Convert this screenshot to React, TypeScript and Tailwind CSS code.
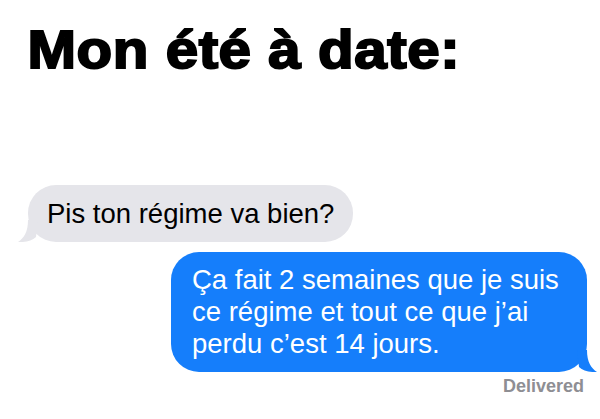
const sans = "font-['Liberation_Sans',Arial,sans-serif]";

function Tail({ side, color }: { side: "left" | "right"; color: string }) {
  // curled tail at the bottom corner of an iMessage bubble
  const d =
    side === "left"
      ? "M10 0 C10 12 6 18 0 22 C8 22.5 14 20.5 18 17 L20 0 Z"
      : "M10 0 C10 12 14 18 20 22 C12 22.5 6 20.5 2 17 L0 0 Z";
  return (
    <svg
      width="20"
      height="22"
      viewBox="0 0 20 22"
      className={`absolute bottom-0 ${side === "left" ? "-left-[10px]" : "-right-[10px]"}`}
    >
      <path d={d} fill={color} />
    </svg>
  );
}

export default function App() {
  return (
    <div className={`h-[419px] w-[600px] overflow-hidden bg-white ${sans}`}>
      <h1 className="origin-left scale-x-[1.1] pl-[25px] pt-[19px] text-[53px] leading-[62px] font-bold tracking-[0.5px] whitespace-nowrap text-black [-webkit-text-stroke:2px_black]">
        Mon été à date:
      </h1>

      <div className="mt-[104px] pl-[28px]">
        <div className="relative inline-block rounded-[28px] bg-[#e5e5ea] py-[12px] pl-[19px] pr-[19px] text-[27.5px] leading-[33px] text-black">
          Pis ton régime va bien?
          <Tail side="left" color="#e5e5ea" />
        </div>
      </div>

      <div className="mt-[10px] flex justify-end pr-[13px]">
        <div className="relative w-[416px] rounded-[28px] bg-[#157efb] py-[12px] pl-[21px] pr-[10px] text-[27.5px] leading-[32px] text-white">
          Ça fait 2 semaines que je suis ce régime et tout ce que j’ai perdu c’est 14 jours.
          <Tail side="right" color="#157efb" />
        </div>
      </div>

      <div className="mt-[4px] pr-[16px] text-right text-[18px] leading-[20px] font-bold text-[#8e8e93]">
        Delivered
      </div>
    </div>
  );
}
